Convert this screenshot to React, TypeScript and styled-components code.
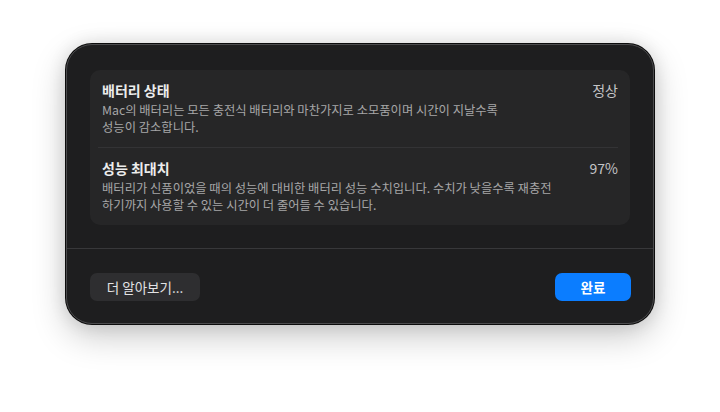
import styled, { createGlobalStyle } from "styled-components";

const GlobalStyle = createGlobalStyle`
  html, body {
    margin: 0;
    padding: 0;
    background: #ffffff;
  }
  body {
    font-family: "Noto Sans CJK KR", "Noto Sans", "Liberation Sans", sans-serif;
    -webkit-font-smoothing: antialiased;
  }
`;

const Page = styled.div`
  width: 720px;
  height: 412px;
  display: flex;
  justify-content: center;
  align-items: flex-start;
  padding-top: 44px;
  box-sizing: border-box;
`;

const Dialog = styled.div`
  width: 588px;
  height: 280px;
  box-sizing: border-box;
  background: #1e1e1f;
  border-radius: 26px;
  border: 1px solid #4b4b4d;
  box-shadow: 0 0 0 1px #0c0c0c, 0 12px 34px rgba(0, 0, 0, 0.22),
    0 0 18px rgba(0, 0, 0, 0.12);
  display: flex;
  flex-direction: column;
  overflow: hidden;
`;

const Content = styled.div`
  padding: 25px 23px 0;
`;

const Card = styled.div`
  background: #262627;
  border-radius: 10px;
  display: flex;
  flex-direction: column;
`;

const Row = styled.div`
  display: flex;
  justify-content: space-between;
  align-items: flex-start;
  padding: 10px 12px 11px;
`;

const RowText = styled.div`
  display: flex;
  flex-direction: column;
  gap: 2px;
`;

const Title = styled.div`
  font-size: 14px;
  line-height: 20px;
  font-weight: 600;
  color: #ececec;
`;

const Description = styled.div`
  font-size: 12.3px;
  line-height: 17px;
  color: #a6a6a8;
`;

const Value = styled.div`
  font-size: 14px;
  line-height: 20px;
  color: #c4c4c6;
`;

const Divider = styled.div`
  height: 1px;
  margin: 0 12px 0 8px;
  background: #333335;
`;

const Separator = styled.div`
  height: 1px;
  background: #38383a;
  margin-top: 23px;
`;

const Footer = styled.div`
  display: flex;
  justify-content: space-between;
  align-items: center;
  padding: 24px 22px 0 23px;
`;

const Button = styled.button<{ $primary?: boolean }>`
  height: 28px;
  min-width: ${(p) => (p.$primary ? "76px" : "110px")};
  padding: 0 12px;
  border: none;
  border-radius: 7px;
  font-family: inherit;
  font-size: 13.5px;
  font-weight: ${(p) => (p.$primary ? 600 : 400)};
  color: ${(p) => (p.$primary ? "#ffffff" : "#e2e2e4")};
  background: ${(p) => (p.$primary ? "#0b7dff" : "#2e2e30")};
  cursor: default;
`;

const rows = [
  {
    title: "배터리 상태",
    value: "정상",
    lines: [
      "Mac의 배터리는 모든 충전식 배터리와 마찬가지로 소모품이며 시간이 지날수록",
      "성능이 감소합니다.",
    ],
  },
  {
    title: "성능 최대치",
    value: "97%",
    lines: [
      "배터리가 신품이었을 때의 성능에 대비한 배터리 성능 수치입니다. 수치가 낮을수록 재충전",
      "하기까지 사용할 수 있는 시간이 더 줄어들 수 있습니다.",
    ],
  },
];

export default function App() {
  return (
    <>
      <GlobalStyle />
      <Page>
        <Dialog>
          <Content>
            <Card>
              {rows.map((row, i) => (
                <div key={row.title}>
                  {i > 0 && <Divider />}
                  <Row>
                    <RowText>
                      <Title>{row.title}</Title>
                      <div>
                        {row.lines.map((line) => (
                          <Description key={line}>{line}</Description>
                        ))}
                      </div>
                    </RowText>
                    <Value>{row.value}</Value>
                  </Row>
                </div>
              ))}
            </Card>
          </Content>
          <Separator />
          <Footer>
            <Button>더 알아보기...</Button>
            <Button $primary>완료</Button>
          </Footer>
        </Dialog>
      </Page>
    </>
  );
}
